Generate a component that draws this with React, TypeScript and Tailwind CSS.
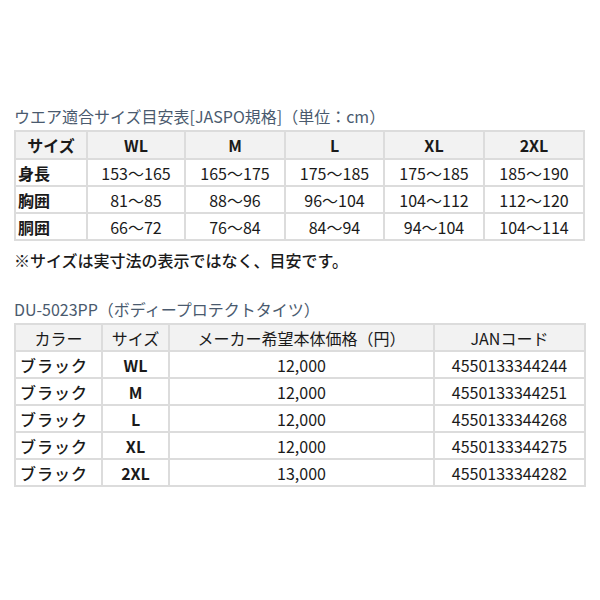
const font = { fontFamily: '"Noto Sans CJK JP", "Noto Sans", sans-serif' }

const sizeHead = ['WL', 'M', 'L', 'XL', '2XL']
const sizeRows = [
  { label: '身長', values: ['153〜165', '165〜175', '175〜185', '175〜185', '185〜190'] },
  { label: '胸囲', values: ['81〜85', '88〜96', '96〜104', '104〜112', '112〜120'] },
  { label: '胴囲', values: ['66〜72', '76〜84', '84〜94', '94〜104', '104〜114'] },
]

const products = [
  { size: 'WL', price: '12,000', jan: '4550133344244' },
  { size: 'M', price: '12,000', jan: '4550133344251' },
  { size: 'L', price: '12,000', jan: '4550133344268' },
  { size: 'XL', price: '12,000', jan: '4550133344275' },
  { size: '2XL', price: '13,000', jan: '4550133344282' },
]

export default function App() {
  return (
    <div className="w-[600px] h-[600px] bg-white text-[#1a1a1a] px-[14px] pt-[105px]" style={font}>
      <h2 className="text-[16px] leading-[22px] text-[#4a5a6e] mb-[3px]">
        ウエア適合サイズ目安表[JASPO規格]（単位：cm）
      </h2>
      <table className="w-[570px] border-collapse text-[16px] table-fixed">
        <colgroup>
          <col className="w-[72px]" />
          <col className="w-[98px]" />
          <col className="w-[100px]" />
          <col className="w-[99px]" />
          <col className="w-[100px]" />
          <col className="w-[100px]" />
        </colgroup>
        <thead>
          <tr className="bg-[#f2f2f2] h-[28px]">
            <th className="border-2 border-[#dcdcdc] font-semibold text-center">サイズ</th>
            {sizeHead.map((s) => (
              <th key={s} className="border-2 border-[#dcdcdc] font-semibold text-center">{s}</th>
            ))}
          </tr>
        </thead>
        <tbody>
          {sizeRows.map((row) => (
            <tr key={row.label} className="h-[27px]">
              <td className="border-2 border-[#dcdcdc] font-semibold pl-[2px]">{row.label}</td>
              {row.values.map((v, i) => (
                <td key={i} className="border-2 border-[#dcdcdc] text-center">{v}</td>
              ))}
            </tr>
          ))}
        </tbody>
      </table>
      <p className="text-[16px] leading-[22px] mt-[8px] font-medium">※サイズは実寸法の表示ではなく、目安です。</p>

      <h2 className="text-[16px] leading-[22px] text-[#4a5a6e] mt-[27px] mb-[3px]">
        DU-5023PP（ボディープロテクトタイツ）
      </h2>
      <table className="w-[570px] border-collapse text-[16px] table-fixed">
        <colgroup>
          <col className="w-[87px]" />
          <col className="w-[67px]" />
          <col className="w-[265px]" />
          <col className="w-[151px]" />
        </colgroup>
        <thead>
          <tr className="bg-[#f2f2f2] h-[27px]">
            <th className="border-2 border-[#dcdcdc] font-normal text-center">カラー</th>
            <th className="border-2 border-[#dcdcdc] font-normal text-center">サイズ</th>
            <th className="border-2 border-[#dcdcdc] font-normal text-center">メーカー希望本体価格（円）</th>
            <th className="border-2 border-[#dcdcdc] font-normal text-center">JANコード</th>
          </tr>
        </thead>
        <tbody>
          {products.map((p) => (
            <tr key={p.jan} className="h-[27px]">
              <td className="border-2 border-[#dcdcdc] font-medium pl-[4px] tracking-[1px]">ブラック</td>
              <td className="border-2 border-[#dcdcdc] font-semibold text-center">{p.size}</td>
              <td className="border-2 border-[#dcdcdc] text-center">{p.price}</td>
              <td className="border-2 border-[#dcdcdc] text-center">{p.jan}</td>
            </tr>
          ))}
        </tbody>
      </table>
    </div>
  )
}
